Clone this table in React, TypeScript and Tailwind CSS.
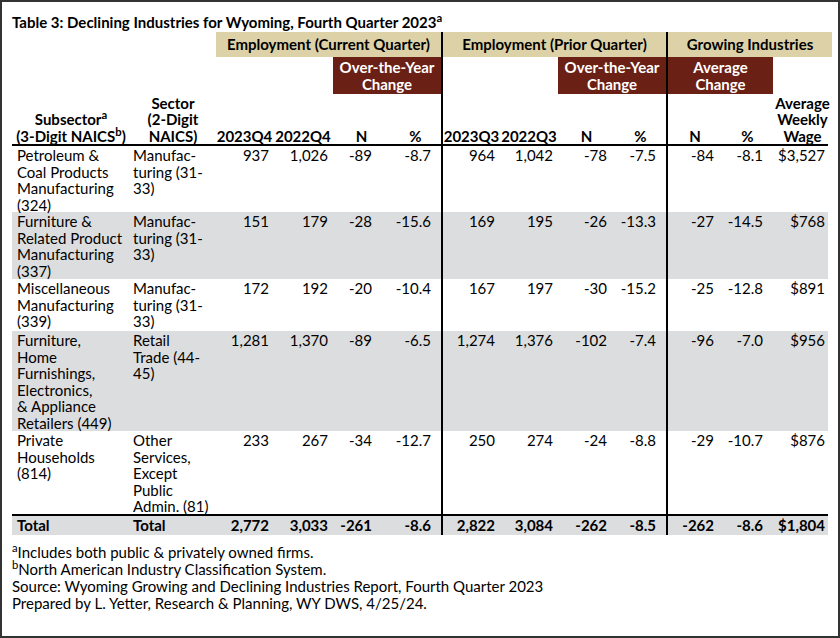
import React from "react";

const grid =
  "grid grid-cols-[118px_86px_57px_60px_57px_51px_59px_58px_57px_51px_56px_51px_59px]";

// right padding for the 11 number columns, written out so tailwind sees them
const numPad = [
  "pr-[4px]",
  "pr-[5px]",
  "pr-[18px]",
  "pr-[10px]",
  "pr-[5px] border-l-2 border-black",
  "pr-[5px]",
  "pr-[8px]",
  "pr-[10px]",
  "pr-[8px] border-l-2 border-black",
  "pr-[10px]",
  "pr-[7px]",
];

const rows = [
  {
    sub: ["Petroleum &", "Coal Products", "Manufacturing", "(324)"],
    sec: ["Manufac-", "turing (31-", "33)"],
    v: ["937", "1,026", "-89", "-8.7", "964", "1,042", "-78", "-7.5", "-84", "-8.1", "$3,527"],
    gray: false,
    h: "h-[66px]",
  },
  {
    sub: ["Furniture &", "Related Product", "Manufacturing", "(337)"],
    sec: ["Manufac-", "turing (31-", "33)"],
    v: ["151", "179", "-28", "-15.6", "169", "195", "-26", "-13.3", "-27", "-14.5", "$768"],
    gray: true,
    h: "h-[67px]",
  },
  {
    sub: ["Miscellaneous", "Manufacturing", "(339)"],
    sec: ["Manufac-", "turing (31-", "33)"],
    v: ["172", "192", "-20", "-10.4", "167", "197", "-30", "-15.2", "-25", "-12.8", "$891"],
    gray: false,
    h: "h-[52px]",
  },
  {
    sub: ["Furniture,", "Home", "Furnishings,", "Electronics,", "& Appliance", "Retailers (449)"],
    sec: ["Retail", "Trade (44-", "45)"],
    v: ["1,281", "1,370", "-89", "-6.5", "1,274", "1,376", "-102", "-7.4", "-96", "-7.0", "$956"],
    gray: true,
    h: "h-[100px]",
  },
  {
    sub: ["Private", "Households", "(814)"],
    sec: ["Other", "Services,", "Except", "Public", "Admin. (81)"],
    v: ["233", "267", "-34", "-12.7", "250", "274", "-24", "-8.8", "-29", "-10.7", "$876"],
    gray: false,
    h: "h-[83px]",
  },
];

const total = ["2,772", "3,033", "-261", "-8.6", "2,822", "3,084", "-262", "-8.5", "-262", "-8.6", "$1,804"];

const Lines = ({ lines }: { lines: string[] }) => (
  <>
    {lines.map((l, i) => (
      <div key={i} className="whitespace-nowrap">
        {l}
      </div>
    ))}
  </>
);

const App = () => {
  return (
    <div className="w-[840px] h-[638px] border-2 border-[#333] bg-white px-[10px] pt-[10px] text-black font-[Lato,sans-serif] text-[15px] leading-[16.5px]">
      <div className="h-[20px] leading-[20px] font-bold whitespace-nowrap">
        Table 3: Declining Industries for Wyoming, Fourth Quarter 2023<sup>a</sup>
      </div>

      {/* group header band */}
      <div className={`${grid} h-[25px] font-bold leading-[25px] text-center`}>
        <div className="col-span-2" />
        <div className="col-span-4 bg-[#ddd2a7]">Employment (Current Quarter)</div>
        <div className="col-span-4 bg-[#ddd2a7] border-l-2 border-black">Employment (Prior Quarter)</div>
        <div className="col-span-3 bg-[#ddd2a7] border-l-2 border-black">Growing Industries</div>
      </div>

      {/* red change labels */}
      <div className={`${grid} h-[37px] font-bold text-white text-center`}>
        <div className="col-span-4" />
        <div className="col-span-2 bg-[#6b2015] flex flex-col justify-center">
          <div>Over-the-Year</div>
          <div>Change</div>
        </div>
        <div className="col-span-2 border-l-2 border-black" />
        <div className="col-span-2 bg-[#6b2015] flex flex-col justify-center">
          <div>Over-the-Year</div>
          <div>Change</div>
        </div>
        <div className="col-span-2 bg-[#6b2015] border-l-2 border-black flex flex-col justify-center">
          <div>Average</div>
          <div>Change</div>
        </div>
        <div />
      </div>

      {/* column labels */}
      <div className={`${grid} h-[50px] font-bold text-center items-end`}>
        <div className="whitespace-nowrap">
          <div>
            Subsector<sup>a</sup>
          </div>
          <div>
            (3-Digit NAICS<sup>b</sup>)
          </div>
        </div>
        <div>
          <div>Sector</div>
          <div>(2-Digit</div>
          <div>NAICS)</div>
        </div>
        <div>2023Q4</div>
        <div>2022Q4</div>
        <div>N</div>
        <div>%</div>
        <div className="border-l-2 border-black self-stretch flex items-end justify-center">2023Q3</div>
        <div>2022Q3</div>
        <div>N</div>
        <div>%</div>
        <div className="border-l-2 border-black self-stretch flex items-end justify-center">N</div>
        <div>%</div>
        <div>
          <div>Average</div>
          <div>Weekly</div>
          <div>Wage</div>
        </div>
      </div>
      <div className={`${grid} h-[2px] bg-black`} />

      {rows.map((r, i) => (
        <div key={i} className={`${grid} ${r.h} ${r.gray ? "bg-[#dcddde]" : ""}`}>
          <div className="pl-[5px] pt-[1px]">
            <Lines lines={r.sub} />
          </div>
          <div className="pl-[3px] pt-[1px]">
            <Lines lines={r.sec} />
          </div>
          {r.v.map((n, j) => (
            <div key={j} className={`text-right pt-[1px] ${numPad[j]}`}>
              {n}
            </div>
          ))}
        </div>
      ))}

      <div className={`${grid} h-[2px] bg-black`} />
      <div className={`${grid} h-[19px] bg-[#dcddde] font-bold leading-[19px]`}>
        <div className="pl-[5px]">Total</div>
        <div className="pl-[3px]">Total</div>
        {total.map((n, j) => (
          <div key={j} className={`text-right ${numPad[j]}`}>
            {n}
          </div>
        ))}
      </div>

      <div className="mt-[9px] leading-[17px]">
        <div>
          <sup>a</sup>Includes both public &amp; privately owned firms.
        </div>
        <div>
          <sup>b</sup>North American Industry Classification System.
        </div>
        <div>Source: Wyoming Growing and Declining Industries Report, Fourth Quarter 2023</div>
        <div>Prepared by L. Yetter, Research &amp; Planning, WY DWS, 4/25/24.</div>
      </div>
    </div>
  );
};

export default App;
